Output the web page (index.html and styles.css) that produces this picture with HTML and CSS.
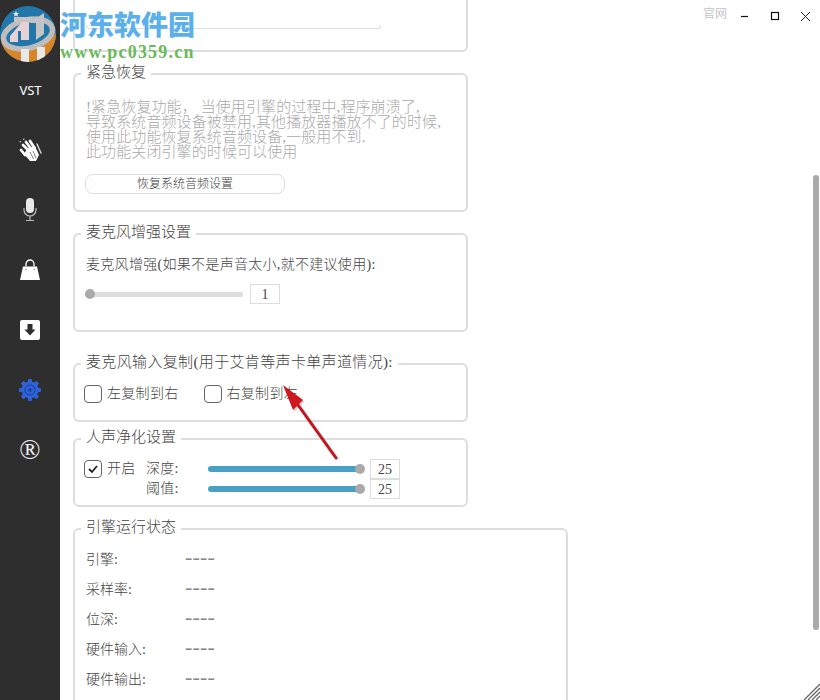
FILE: index.html
```html
<!DOCTYPE html>
<html lang="zh-CN">
<head>
<meta charset="utf-8">
<title>VST</title>
<link rel="stylesheet" href="styles.css">
</head>
<body>
<div class="app">
  <nav class="sidebar">
    <div class="nav-item nav-logo"></div>
    <div class="nav-item vst">VST</div>
    <div class="nav-item">
      <svg width="26" height="26" viewBox="0 0 26 26"><path d="M10 12L18 9L22 18L19 24L13 24L7 17z" fill="#fff"/><path d="M12 14L6 8M14.500 12.500L9 5M17.500 11L13 4M8 18L4 13" stroke="#fff" stroke-width="2.800" stroke-linecap="round" fill="none"/><path d="M20 7L24 16" stroke="#ddd" stroke-width="1.400" stroke-linecap="round"/><path d="M16 14L19 21M13 15L16.500 22" stroke="#2e2e2e" stroke-width=".6"/><path d="M6 2.500l1.500-.8M2.500 5l1.500-.8" stroke="#ccc" stroke-width="1.300"/></svg>
    </div>
    <div class="nav-item">
      <svg width="14" height="24" viewBox="0 0 14 24"><rect x="3" y="0" width="8" height="15" rx="4" fill="#e8e8e8"/><path d="M1 10v2a6 6 0 0 0 12 0v-2M7 18v4M3 22.500h8" fill="none" stroke="#bbb" stroke-width="1.200"/></svg>
    </div>
    <div class="nav-item">
      <svg width="22" height="22" viewBox="0 0 22 22"><path d="M4 7.500h14l3 13.500H1z" fill="#fff"/><path d="M7 7.500V5a4 4 0 0 1 8 0v2.500" fill="none" stroke="#fff" stroke-width="1.300"/><circle cx="7" cy="10.500" r=".7" fill="#777"/><circle cx="15" cy="10.500" r=".7" fill="#777"/></svg>
    </div>
    <div class="nav-item">
      <svg width="22" height="22" viewBox="0 0 22 22"><rect x="1" y="1" width="20" height="20" rx="2" fill="#fff"/><path d="M8.500 5h5v5.500h3L11 16.500 5.500 10.500h3z" fill="#2e2e2e"/></svg>
    </div>
    <div class="nav-item">
      <svg width="24" height="24" viewBox="0 0 24 24"><g fill="#2f62d6"><circle cx="12" cy="12" r="8.500"/><rect x="10" y="1" width="4" height="22" rx=".8"/><rect x="10" y="1" width="4" height="22" rx=".8" transform="rotate(45 12 12)"/><rect x="10" y="1" width="4" height="22" rx=".8" transform="rotate(90 12 12)"/><rect x="10" y="1" width="4" height="22" rx=".8" transform="rotate(135 12 12)"/></g><circle cx="12" cy="12" r="5" fill="none" stroke="#173f9c" stroke-width="1"/><circle cx="12" cy="12" r="1.800" fill="#173f9c"/></svg>
    </div>
    <div class="nav-item reg">®</div>
  </nav>

  <main class="content">
    <div class="cut-panel"><div class="cut-inner"></div></div>

    <fieldset class="group g-restore">
      <legend>紧急恢复</legend>
      <p class="notice">!紧急恢复功能， 当使用引擎的过程中,程序崩溃了,<br>导致系统音频设备被禁用,其他播放器播放不了的时候,<br>使用此功能恢复系统音频设备,一般用不到.<br>此功能关闭引擎的时候可以使用</p>
      <button class="btn">恢复系统音频设置</button>
    </fieldset>

    <fieldset class="group g-boost">
      <legend>麦克风增强设置</legend>
      <div class="boost-label">麦克风增强(如果不是声音太小,就不建议使用):</div>
      <div class="slider-row">
        <div class="track track-off"><span class="knob knob-start"></span></div>
        <div class="num">1</div>
      </div>
    </fieldset>

    <fieldset class="group g-copy">
      <legend>麦克风输入复制(用于艾肯等声卡单声道情况):</legend>
      <div class="copy-row">
        <label class="check"><span class="box"></span>左复制到右</label>
        <label class="check"><span class="box"></span>右复制到左</label>
      </div>
    </fieldset>

    <fieldset class="group g-clean">
      <legend>人声净化设置</legend>
      <div class="clean-grid">
        <label class="check">
          <span class="box"><svg width="12" height="10" viewBox="0 0 12 10"><path d="M2 5l3 3 5-6" fill="none" stroke="#222" stroke-width="1.800"/></svg></span>开启
        </label>
        <span class="clean-label">深度:</span>
        <div class="track track-on"><span class="knob knob-end"></span></div>
        <div class="num">25</div>
        <span class="clean-label row2">阈值:</span>
        <div class="track track-on row2"><span class="knob knob-end"></span></div>
        <div class="num row2">25</div>
      </div>
    </fieldset>

    <fieldset class="group g-status">
      <legend>引擎运行状态</legend>
      <dl class="status">
        <dt>引擎:</dt><dd>----</dd>
        <dt>采样率:</dt><dd>----</dd>
        <dt>位深:</dt><dd>----</dd>
        <dt>硬件输入:</dt><dd>----</dd>
        <dt>硬件输出:</dt><dd>----</dd>
      </dl>
    </fieldset>
  </main>

  <div class="window-bar">
    <span class="site">官网</span>
    <svg class="ctl" width="30" height="18" viewBox="0 0 30 18"><path d="M11 12.500h7" stroke="#111" stroke-width="1.200"/></svg>
    <svg class="ctl" width="30" height="18" viewBox="0 0 30 18"><rect x="11.500" y="8.500" width="7" height="7" fill="none" stroke="#111" stroke-width="1.200"/></svg>
    <svg class="ctl" width="30" height="18" viewBox="0 0 30 18"><path d="M11 8l9 9M20 8l-9 9" stroke="#222" stroke-width="1"/></svg>
  </div>

  <div class="scrollbar"></div>

  <svg class="grip" width="18" height="18" viewBox="0 0 18 18"><path d="M18 2L2 18M18 6L6 18M18 10L10 18M18 14L14 18" stroke="#666" stroke-width="1.300"/></svg>

  <svg class="arrow" width="70" height="100" viewBox="0 0 70 100"><path d="M17 29L55 82" stroke="#777" stroke-opacity=".4" stroke-width="3" transform="translate(1.500 1)"/><path d="M2 9L22 24L12 34z" fill="#777" fill-opacity=".35" transform="translate(1.500 1.500)"/><path d="M17 29L55 82" stroke="#c4161f" stroke-width="3" stroke-linecap="round"/><path d="M2 9L22 24L12 34z" fill="#d0161f"/></svg>

  <svg class="logo" width="58" height="58" viewBox="0 0 58 58"><defs><clipPath id="disc"><circle cx="28" cy="28" r="28"/></clipPath></defs><g clip-path="url(#disc)"><rect width="58" height="58" fill="#2276a9"/><path d="M0 34C8 46 44 48 58 24V58H0z" fill="#d6852a"/><ellipse cx="28" cy="28" rx="25" ry="14" transform="rotate(-14 28 28)" fill="none" stroke="#bdbdbd" stroke-width="5.500"/><path d="M29 17L44 7V28L36 34V17z" fill="#c4c4c4"/><path d="M10 30L22 16H29V34H21V25H18V36H10z" fill="#e6d2d4"/><path d="M14 11H32V16H14z" fill="#c4c4c4"/><rect x="21" y="43" width="8" height="15" fill="#e8e8e8"/><rect x="37" y="41" width="8" height="17" fill="#e8e8e8"/><path d="M16 5l.9 2 2.100 .2-1.600 1.400 .5 2.100-1.900-1.100-1.900 1.100 .5-2.100-1.600-1.400 2.100-.2z" fill="#e8eef5"/></g></svg>

  <div class="watermark">
    <div class="wm-title">河东软件园</div>
    <div class="wm-url">www.pc0359.cn</div>
  </div>
</div>
</body>
</html>
```
FILE: styles.css
```css
* { box-sizing: border-box; }
html, body { margin: 0; height: 100%; }
body { background: #fff; font-family: "Liberation Serif", "Noto Sans CJK SC", serif; color: #444; }

.app { position: relative; display: flex; width: 820px; height: 700px; overflow: hidden; }

.sidebar { flex: 0 0 60px; background: #2e2e2e; display: flex; flex-direction: column; }
.nav-item { height: 60px; display: flex; align-items: center; justify-content: center; color: #fff; }
.vst { font: 13px "Noto Sans", sans-serif; padding-left: 1px; }
.reg { font: 28px "Liberation Serif", serif; color: #eee; }

.content { flex: 1; padding-left: 13px; font-size: 15px; line-height: 20px; font-weight: 300; }

.cut-panel { width: 395px; height: 52px; border: 2px solid #ddd; border-top: 0; border-radius: 0 0 6px 6px; padding: 25px 85px 0 11px; }
.cut-inner { height: 4px; border: 1px solid #e0e0e0; border-top: 0; border-radius: 0 0 3px 3px; }

.group { margin: 0; min-width: 0; width: 395px; border: 2px solid #ddd; border-radius: 6px; padding: 0 11px; }
.group legend { margin-left: -5px; padding: 0 5px; height: 20px; line-height: 17px; font-size: 15px; color: #444; }

.g-restore { margin-top: 12px; height: 148px; }
.g-boost { margin-top: 12px; height: 108px; }
.g-copy { margin-top: 22px; height: 68px; }
.g-copy legend { letter-spacing: .35px; }
.g-clean { margin-top: 7px; height: 78px; }
.g-status { margin-top: 12px; width: 495px; height: 200px; }

.notice { margin: 16px 0 0; font-size: 15px; line-height: 15px; letter-spacing: .1px; color: #aaa; white-space: nowrap; }
.btn { display: block; width: 200px; height: 20px; margin: 14px 0 0 -1px; padding: 0; background: #fff; border: 1px solid #ddd; border-radius: 8px; font: 300 12px/18px "Liberation Serif", "Noto Sans CJK SC", serif; color: #444; }

.boost-label { margin-top: 11px; font-size: 14px; letter-spacing: .3px; white-space: nowrap; }
.slider-row { display: flex; align-items: center; gap: 7px; margin: 9px 0 0 -1px; }

.track { position: relative; display: block; width: 158px; height: 5px; border-radius: 3px; background: #ddd; }
.track-on { width: 152px; height: 6px; background: #4a9fc4; }
.knob { position: absolute; top: 50%; width: 10px; height: 10px; margin-top: -5px; border-radius: 50%; background: #aaa; }
.knob-start { left: 0; }
.knob-end { right: -5px; }

.num { width: 30px; height: 20px; border: 1px solid #ddd; text-align: center; font-size: 14px; line-height: 19px; color: #444; }

.copy-row { display: flex; gap: 25px; margin: 10px 0 0 -2px; }
.check { display: flex; align-items: center; gap: 5px; font-size: 14px; letter-spacing: .3px; color: #444; white-space: nowrap; }
.box { display: flex; align-items: center; justify-content: center; width: 18px; height: 18px; border: 1.500px solid #666; border-radius: 4px; }

.clean-grid { display: grid; grid-template-columns: 62px 62px 162px 30px; grid-template-rows: 20px 20px; align-items: center; margin: 10px 0 0 -2px; }
.clean-label { font-size: 14px; letter-spacing: .3px; white-space: nowrap; }
.row2 { grid-row: 2; }
.clean-label.row2 { grid-column: 2; }
.track.row2 { grid-column: 3; }
.num.row2 { grid-column: 4; }

.status { display: grid; grid-template-columns: 99px 1fr; grid-auto-rows: 30px; align-items: center; margin: 6px 0 0; font-size: 14px; }
.status dt { margin: 0; }
.status dd { margin: 0 0 6px; font-size: 22px; line-height: 24px; color: #888; letter-spacing: .2px; }

.window-bar { position: absolute; top: 4px; right: 0; display: flex; align-items: flex-start; }
.site { font-size: 12px; font-weight: 300; line-height: 18px; color: #aaa; margin: 1px 3px 0 0; }
.ctl { display: block; }

.scrollbar { position: absolute; left: 813px; top: 175px; width: 6px; height: 455px; border-radius: 3px; background: #aaa; }
.grip { position: absolute; right: 0; bottom: 0; }
.arrow { position: absolute; left: 281px; top: 376px; }
.logo { position: absolute; left: 0; top: 6px; }

.watermark { position: absolute; left: 60px; top: 8px; }
.wm-title { font: 900 27px/32px "Noto Sans CJK SC", sans-serif; color: #5cb0ea; }
.wm-url { font: 700 18px/18px "Liberation Serif", serif; letter-spacing: 1.200px; color: #6ab95a; margin-top: 3px; }
```
